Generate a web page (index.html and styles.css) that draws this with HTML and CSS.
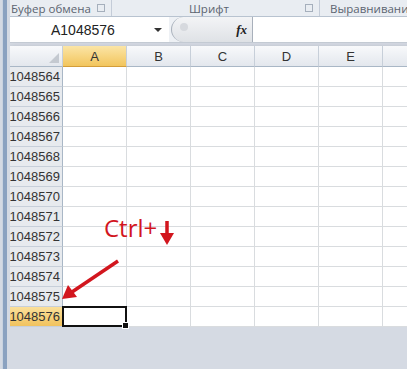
FILE: index.html
```html
<!DOCTYPE html>
<html>
<head>
<meta charset="utf-8">
<link rel="stylesheet" href="styles.css">
<title>Ctrl+Down</title>
</head>
<body>
<div class="window">
  <div class="edge"></div>
  <div class="main">
    <div class="ribbon">
      <div class="group g1"><span class="gname">Буфер обмена</span><span class="launcher"></span></div>
      <div class="group g2"><span class="gname mid">Шрифт</span><span class="launcher"></span></div>
      <div class="group g3">Выравнивание</div>
    </div>
    <div class="fbar">
      <div class="namebox"><span class="ref">A1048576</span><span class="drop"></span></div>
      <div class="bubble"><span class="knob"></span><span class="fx">fx</span></div>
      <div class="formula"></div>
    </div>
    <div class="sheet">
      <div class="hd corner"></div>
      <div class="hd col active">A</div>
      <div class="hd col">B</div>
      <div class="hd col">C</div>
      <div class="hd col">D</div>
      <div class="hd col">E</div>
      <div class="hd col"></div>

      <div class="rh">1048564</div><div class="c"></div><div class="c"></div><div class="c"></div><div class="c"></div><div class="c"></div><div class="c"></div>
      <div class="rh">1048565</div><div class="c"></div><div class="c"></div><div class="c"></div><div class="c"></div><div class="c"></div><div class="c"></div>
      <div class="rh">1048566</div><div class="c"></div><div class="c"></div><div class="c"></div><div class="c"></div><div class="c"></div><div class="c"></div>
      <div class="rh">1048567</div><div class="c"></div><div class="c"></div><div class="c"></div><div class="c"></div><div class="c"></div><div class="c"></div>
      <div class="rh">1048568</div><div class="c"></div><div class="c"></div><div class="c"></div><div class="c"></div><div class="c"></div><div class="c"></div>
      <div class="rh">1048569</div><div class="c"></div><div class="c"></div><div class="c"></div><div class="c"></div><div class="c"></div><div class="c"></div>
      <div class="rh">1048570</div><div class="c"></div><div class="c"></div><div class="c"></div><div class="c"></div><div class="c"></div><div class="c"></div>
      <div class="rh">1048571</div><div class="c"></div><div class="c"></div><div class="c"></div><div class="c"></div><div class="c"></div><div class="c"></div>
      <div class="rh">1048572</div><div class="c"></div><div class="c"></div><div class="c"></div><div class="c"></div><div class="c"></div><div class="c"></div>
      <div class="rh">1048573</div><div class="c"></div><div class="c"></div><div class="c"></div><div class="c"></div><div class="c"></div><div class="c"></div>
      <div class="rh">1048574</div><div class="c"></div><div class="c"></div><div class="c"></div><div class="c"></div><div class="c"></div><div class="c"></div>
      <div class="rh">1048575</div><div class="c"></div><div class="c"></div><div class="c"></div><div class="c"></div><div class="c"></div><div class="c"></div>
      <div class="rh active">1048576</div><div class="c sel"><span class="handle"></span></div><div class="c"></div><div class="c"></div><div class="c"></div><div class="c"></div><div class="c"></div>
    </div>
    <div class="below"></div>
  </div>
</div>

<div class="note">Ctrl+</div>
<svg class="arrows" width="407" height="369" viewBox="0 0 407 369">
  <line x1="167" y1="221" x2="167" y2="236" stroke="#d2161e" stroke-width="3.5"/>
  <polygon points="160,233 174,233 167,245" fill="#d2161e"/>
  <line x1="118" y1="261" x2="72" y2="292" stroke="#d2161e" stroke-width="3.5"/>
  <polygon points="62,299 68,285 77,297" fill="#d2161e"/>
</svg>
</body>
</html>
```

FILE: styles.css
```css
body {
    margin: 0;
    width: 407px;
    height: 369px;
    overflow: hidden;
    background: #d5dae3;
    font-family: "Liberation Sans", Arial, sans-serif;
    position: relative;
}

.window {
    display: flex;
    height: 369px;
}

.edge {
    width: 4px;
    margin-left: 2px;
    margin-right: 3px;
    background: #8ba2c0;
    border-left: 1px solid #c9d3e0;
    flex: none;
}

.main {
    flex: 1;
    display: flex;
    flex-direction: column;
    background: #d5dae3;
    overflow: hidden;
}

.ribbon {
    display: flex;
    height: 16px;
    background: #e9edf2;
    border-bottom: 1px solid #b8c3d0;
    font-family: "Open Sans", sans-serif;
    font-size: 11.5px;
    color: #5b6470;
    line-height: 15px;
}

.group {
    display: flex;
    align-items: center;
    white-space: nowrap;
    border-right: 1px solid #c4ccd8;
    flex: none;
}

.g1 { width: 100px; padding-left: 1px; }
.g2 { width: 207px; }
.g3 { padding-left: 10px; border-right: none; }

.gname { flex: 1; }
.gname.mid { padding-left: 77px; }

.launcher {
    width: 6px;
    height: 6px;
    border: 1px solid #a5afbc;
    margin-right: 6px;
    flex: none;
}

.fbar {
    display: flex;
    height: 25px;
    background: #eef1f5;
    border-bottom: 1px solid #c6ccd5;
    margin-bottom: 3px;
}

.namebox {
    width: 159px;
    background: #fff;
    display: flex;
    align-items: center;
    font-size: 14px;
    color: #222;
}

.ref { margin-left: 41px; flex: 1; }

.drop {
    width: 0;
    height: 0;
    border-left: 4px solid transparent;
    border-right: 4px solid transparent;
    border-top: 4px solid #333;
    margin-right: 7px;
}

.bubble {
    width: 80px;
    display: flex;
    align-items: center;
    background: linear-gradient(#f3f4f6, #dfe2e6);
    border-radius: 13px 0 0 13px;
    border-left: 1px solid #a8b0bb;
    margin-left: 2px;
}

.knob {
    width: 8px;
    height: 8px;
    border-radius: 50%;
    background: #d6d9de;
    margin-left: 8px;
    margin-top: -6px;
    flex: none;
}

.fx {
    margin-left: auto;
    margin-right: 5px;
    font-family: "Liberation Serif", serif;
    font-style: italic;
    font-weight: bold;
    font-size: 13px;
    color: #222;
}

.formula {
    flex: 1;
    background: #fff;
    border-left: 1px solid #a8b0bb;
}

.sheet {
    display: grid;
    grid-template-columns: 53px repeat(6, 64px);
    grid-template-rows: 21px repeat(13, 20px);
    background: #fff;
    width: 450px;
    box-shadow: 0 4px 7px rgba(70, 80, 90, 0.7);
}

.hd {
    background: linear-gradient(#f8f9fb, #e3e7ed);
    border-right: 1px solid #c7cfd9;
    border-bottom: 1px solid #a9b7c6;
    font-size: 13px;
    color: #333;
    display: flex;
    align-items: center;
    justify-content: center;
}

.corner {
    position: relative;
}

.corner::after {
    content: "";
    position: absolute;
    right: 3px;
    bottom: 3px;
    border-left: 10px solid transparent;
    border-bottom: 10px solid #c4c9d0;
}

.hd.active {
    background: linear-gradient(#fbe5a6, #f2c55d);
    border-bottom-color: #d39d3a;
}

.rh {
    background: #e7eaee;
    border-right: 1px solid #a9b7c6;
    border-bottom: 1px solid #c7cfd9;
    font-size: 13px;
    color: #333;
    display: flex;
    align-items: center;
    justify-content: flex-end;
    padding-right: 2px;
}

.rh.active {
    background: linear-gradient(#fbe09a, #f1c25e);
    border-right-color: #d39d3a;
}

.c {
    border-right: 1px solid #d9dcdf;
    border-bottom: 1px solid #d9dcdf;
}

.sel {
    position: relative;
    border: 2px solid #111;
    margin: -1px 0 0 -1px;
}

.handle {
    position: absolute;
    right: -4px;
    bottom: -4px;
    width: 5px;
    height: 5px;
    background: #111;
    border: 1px solid #fff;
}

.below {
    flex: 1;
    background: #d5dae3;
}

.note {
    position: absolute;
    left: 104px;
    top: 211px;
    font-family: "Open Sans", sans-serif;
    font-size: 24px;
    color: #d2161e;
}

.arrows {
    position: absolute;
    left: 0;
    top: 0;
}
```
